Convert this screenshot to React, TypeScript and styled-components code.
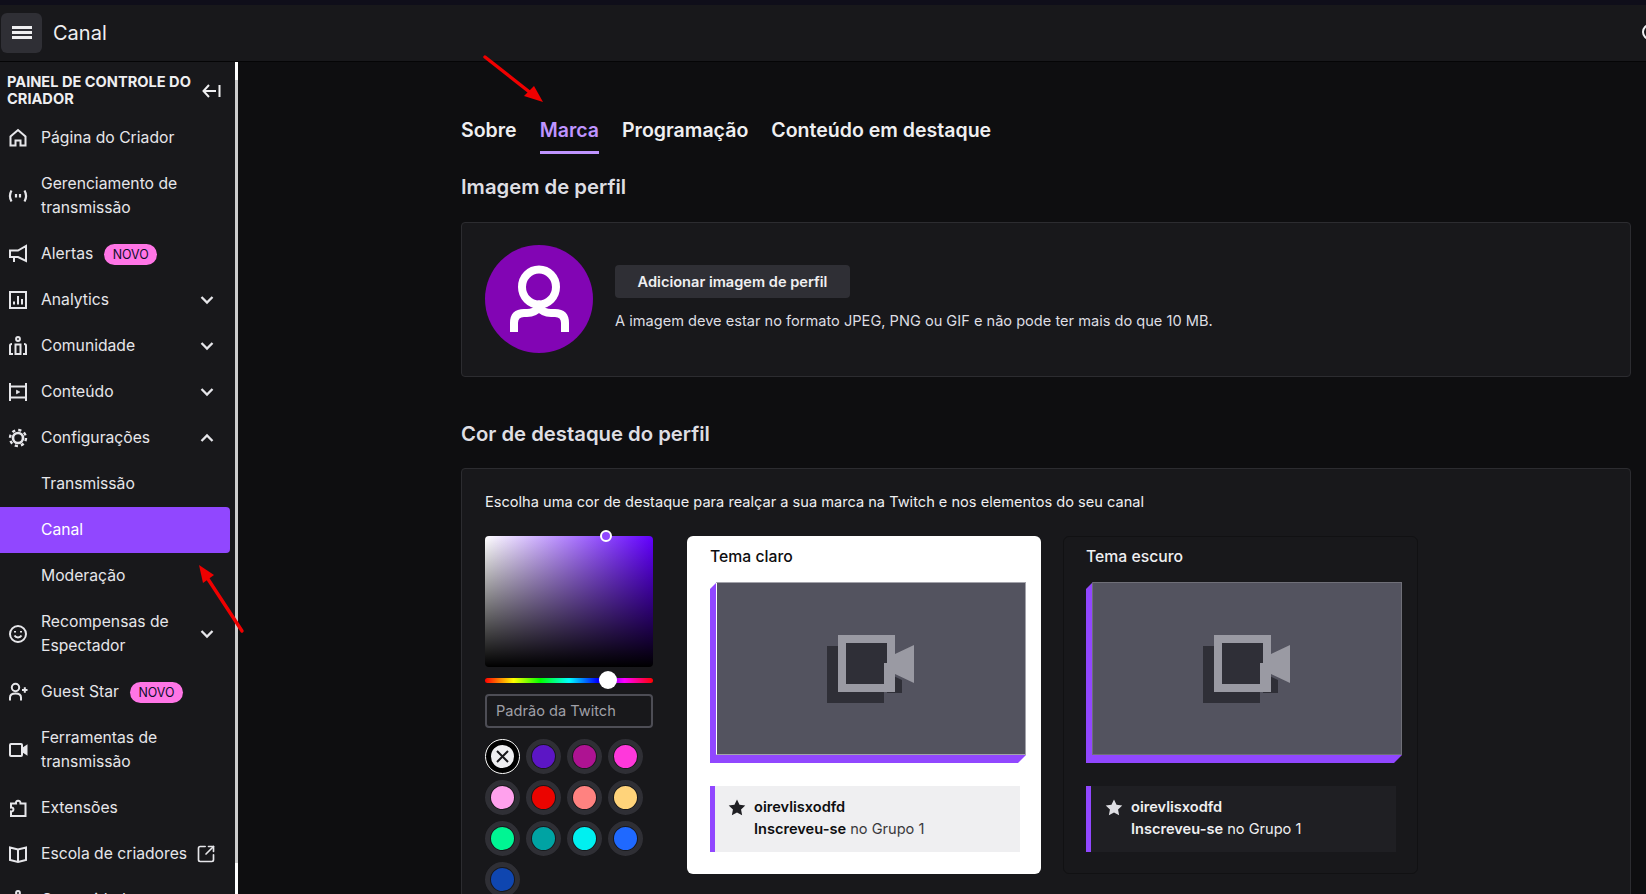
import React from "react";
import styled, { createGlobalStyle } from "styled-components";
import { SquareArrowOutUpRight } from "lucide-react";

const GlobalStyle = createGlobalStyle`
  html, body {
    margin: 0;
    padding: 0;
    height: 100%;
    overflow: hidden;
    background: #0e0e10;
    font-family: Inter, "Liberation Sans", sans-serif;
  }
  * { box-sizing: border-box; }
`;

const Page = styled.div`
  position: relative;
  width: 1646px;
  height: 894px;
  overflow: hidden;
  display: flex;
  flex-direction: column;
`;

const TopStrip = styled.div`
  height: 5px;
  flex: none;
  background: #0f0e1a;
`;

const Header = styled.header`
  height: 57px;
  flex: none;
  display: flex;
  align-items: center;
  gap: 11px;
  padding: 0 0 1px 1px;
  background: #18181b;
  border-bottom: 1px solid #050506;
  position: relative;
  overflow: hidden;
`;

const MenuButton = styled.button`
  width: 41px;
  height: 40px;
  display: flex;
  align-items: center;
  justify-content: center;
  border: 0;
  padding: 0;
  border-radius: 6px;
  background: #2f2f35;
  color: #efeff1;
`;

const PageTitle = styled.h1`
  margin: 0;
  font-size: 20px;
  line-height: 24px;
  font-weight: 400;
  color: #efeff1;
`;

const HeaderEdgeIcon = styled.span`
  position: absolute;
  left: 1642px;
  top: 19px;
  width: 16px;
  height: 16px;
  border: 2.5px solid #efeff1;
  border-radius: 50%;
`;

const Body = styled.div`
  flex: 1;
  min-height: 0;
  display: flex;
`;

const Sidebar = styled.nav`
  width: 235px;
  flex: none;
  background: #18181b;
  overflow: hidden;
  color: #efeff1;
`;

const ScrollTrack = styled.div`
  width: 3px;
  flex: none;
  background: #ffffff;
  padding: 18px 0 31px;
  display: flex;
`;

const ScrollThumb = styled.div`
  flex: 1;
  background: #cdcdcd;
`;

const SideHeading = styled.div`
  height: 52.5px;
  display: flex;
  align-items: center;
  justify-content: space-between;
  padding: 6px 14px 0 7px;
`;

const SideTitle = styled.div`
  width: 192px;
  font-size: 14.6px;
  line-height: 17px;
  font-weight: 700;
  text-transform: uppercase;
`;

const SideRow = styled.div<{ $active?: boolean }>`
  display: flex;
  align-items: center;
  width: 230px;
  min-height: 46px;
  padding: 11px 8px;
  font-size: 15.7px;
  line-height: 24px;
  color: ${(p) => (p.$active ? "#ffffff" : "#e6e6ea")};
  background: ${(p) => (p.$active ? "#9147ff" : "transparent")};
  border-radius: ${(p) => (p.$active ? "0 4px 4px 0" : "0")};
`;

const IconCell = styled.span`
  width: 20px;
  height: 20px;
  margin-right: 13px;
  flex: none;
  display: flex;
  align-items: center;
  justify-content: center;
`;

const ExternalCell = styled.span`
  width: 20px;
  height: 20px;
  margin-left: 9px;
  flex: none;
  display: flex;
  align-items: center;
  justify-content: center;
`;

const ChevronCell = styled.span`
  flex: none;
  width: 16px;
  height: 16px;
  margin-right: 7px;
  display: flex;
`;

const SubLabel = styled.span`
  padding-left: 33px;
`;

const RowLabel = styled.span`
  flex: 1;
  min-width: 0;
  display: flex;
  align-items: center;
`;

const NewBadge = styled.span`
  margin: 2px 0 0 11px;
  height: 21px;
  width: 53px;
  display: inline-flex;
  align-items: center;
  justify-content: center;
  background: #ff75e6;
  color: #0e0e2a;
  font-size: 12.4px;
  font-weight: 400;
  border-radius: 11px;
`;

const Main = styled.main`
  flex: 1;
  min-width: 0;
  padding: 56px 15px 0 223px;
  overflow: hidden;
  color: #efeff1;
`;

const Tabs = styled.div`
  display: flex;
  gap: 23px;
`;

const Tab = styled.div<{ $active?: boolean }>`
  font-size: 19.55px;
  line-height: 24px;
  font-weight: 600;
  padding-bottom: 9px;
  color: ${(p) => (p.$active ? "#bf94ff" : "#efeff1")};
  border-bottom: 3px solid ${(p) => (p.$active ? "#bf94ff" : "transparent")};
`;

const SectionTitle = styled.h2<{ $gap: number }>`
  margin: ${(p) => p.$gap}px 0 0;
  font-size: 20.3px;
  line-height: 24px;
  font-weight: 600;
  color: #dedee3;
`;

const Panel = styled.section<{ $gap: number }>`
  margin-top: ${(p) => p.$gap}px;
  background: #18181b;
  border: 1px solid #2c2c30;
  border-radius: 4px;
`;

const ProfilePanel = styled(Panel)`
  height: 155px;
  padding: 21px 23px 23px;
  display: flex;
  align-items: center;
  gap: 22px;
`;

const Avatar = styled.div`
  width: 108px;
  height: 108px;
  flex: none;
  border-radius: 50%;
  background: #8205b4;
`;

const ProfileText = styled.div`
  margin-bottom: 1px;
`;

const AddButton = styled.button`
  height: 33px;
  width: 235px;
  border: 0;
  border-radius: 4px;
  background: #2f2f35;
  color: #efeff1;
  font: 600 14.6px/20px Inter, "Liberation Sans", sans-serif;
`;

const Hint = styled.p`
  margin: 13px 0 0;
  font-size: 14.6px;
  line-height: 20px;
  color: #dedee3;
`;

const ColorPanel = styled(Panel)`
  padding: 23px 23px 40px;
`;

const ColorHint = styled.p`
  margin: 0 0 24px;
  font-size: 14.6px;
  line-height: 20px;
  color: #efeff1;
`;

const ColorRow = styled.div`
  display: flex;
  align-items: flex-start;
`;

const PickerColumn = styled.div`
  width: 168px;
  margin-right: 34px;
  flex: none;
`;

const SaturationBox = styled.div`
  position: relative;
  height: 131px;
  border-radius: 4px;
  background: linear-gradient(to top, #000 0%, transparent 100%),
    linear-gradient(to right, #fff 0%, #6200ff 100%);
`;

const SaturationHandle = styled.span`
  position: absolute;
  left: 115px;
  top: -6px;
  width: 12px;
  height: 12px;
  border: 2px solid #fff;
  border-radius: 50%;
  background: #9147ff;
`;

const HueBar = styled.div`
  position: relative;
  margin-top: 11px;
  height: 5px;
  border-radius: 3px;
  background: linear-gradient(
    to right,
    #f00 0%,
    #ff0 17%,
    #0f0 33%,
    #0ff 50%,
    #00f 67%,
    #f0f 83%,
    #f00 100%
  );
`;

const HueThumb = styled.span`
  position: absolute;
  left: 114px;
  top: -7px;
  width: 18px;
  height: 18px;
  border-radius: 50%;
  background: #fff;
`;

const ColorInput = styled.div`
  margin-top: 11px;
  height: 34px;
  padding: 0 9px;
  display: flex;
  align-items: center;
  border: 2px solid #4d4d55;
  border-radius: 4px;
  font-size: 14.6px;
  color: #a0a0a8;
`;

const SwatchGrid = styled.div`
  margin-top: 11px;
  display: grid;
  grid-template-columns: repeat(4, 35px);
  gap: 6px;
`;

const Swatch = styled.span<{ $color: string; $selected?: boolean }>`
  width: 35px;
  height: 35px;
  border-radius: 50%;
  display: flex;
  align-items: center;
  justify-content: center;
  color: #18181b;
  background: ${(p) => p.$color};
  border: 6px solid ${(p) => (p.$selected ? "#000" : "#18181b")};
  outline: ${(p) => (p.$selected ? "1.5px solid #fff" : "5px solid #2f2f35")};
  outline-offset: ${(p) => (p.$selected ? "-1.5px" : "-5px")};
`;

const ThemeCard = styled.div<{ $light?: boolean }>`
  width: ${(p) => (p.$light ? 354 : 355)}px;
  height: 338px;
  flex: none;
  margin-right: 22px;
  padding: ${(p) => (p.$light ? "11px 22px 0 23px" : "10px 22px 0 22px")};
  border-radius: 6px;
  background: ${(p) => (p.$light ? "#ffffff" : "#18181b")};
  border: ${(p) => (p.$light ? "0" : "1px solid #111113")};
  color: ${(p) => (p.$light ? "#0e0e10" : "#efeff1")};
`;

const ThemeTitle = styled.div`
  font-size: 15.75px;
  line-height: 20px;
  font-weight: 500;
`;

const PreviewFrame = styled.div`
  margin-top: 15px;
  width: 316px;
  height: 181px;
  padding: 0 0 8px 6px;
  background: #9147ff;
  clip-path: polygon(
    0 7px,
    7px 0,
    100% 0,
    100% calc(100% - 8px),
    calc(100% - 8px) 100%,
    0 100%
  );
`;

const PreviewScreen = styled.div<{ $light?: boolean }>`
  height: 100%;
  display: flex;
  align-items: center;
  justify-content: center;
  background: #53535f;
  border: 1px solid ${(p) => (p.$light ? "#a3a3ab" : "#6f6f78")};
  border-left-color: ${(p) => (p.$light ? "#ffffff" : "#6f6f78")};
`;

const ChatLine = styled.div<{ $light?: boolean }>`
  margin-top: 23px;
  width: 310px;
  height: 66px;
  display: flex;
  gap: 8px;
  padding: 10px 0 0 ${(p) => (p.$light ? 13 : 14)}px;
  border-left: 5px solid #9147ff;
  font-size: 14.6px;
  line-height: 22px;
  background: ${(p) => (p.$light ? "#efeff1" : "#1f1f23")};
`;

const StarCell = styled.span<{ $light?: boolean }>`
  flex: none;
  width: 18px;
  height: 22px;
  display: flex;
  align-items: center;
  color: ${(p) => (p.$light ? "#1f1f23" : "#dedee3")};
`;

const ChatName = styled.div`
  font-weight: 600;
`;

const ChatEvent = styled.span`
  font-weight: 600;
`;

const ChatTier = styled.span<{ $light?: boolean }>`
  color: ${(p) => (p.$light ? "#3a3a3d" : "#efeff1")};
`;

const Annotation = styled.svg`
  position: absolute;
  left: 0;
  top: 0;
  pointer-events: none;
`;

const Icon: React.FC<{ children: React.ReactNode }> = ({ children }) => (
  <svg width={20} height={20} viewBox="0 0 20 20" fill="none" stroke="currentColor" strokeWidth={2}>
    {children}
  </svg>
);

const HomeIcon = () => (
  <Icon>
    <path d="M2.5 17.5V8.5L10 2l7.5 6.5v9h-5v-5h-5v5z" />
  </Icon>
);

const BroadcastIcon = () => (
  <Icon>
    <path d="M3.5 4.5c-2 3.500-2 7.500 0 11M16.500 4.500c2 3.500 2 7.500 0 11" strokeWidth={2.2} />
    <path d="M8 8v3.500M12 8v3.500" strokeWidth={2.2} />
  </Icon>
);

const MegaphoneIcon = () => (
  <Icon>
    <path d="M18 2v15l-8-4H2V6.500h8z" />
    <path d="M6 13v5" />
  </Icon>
);

const AnalyticsIcon = () => (
  <Icon>
    <rect x="2" y="2" width="16" height="16" />
    <path d="M6 14.500v-3M10 14.500V6M14 14.500V9" />
  </Icon>
);

const CommunityIcon = () => (
  <Icon>
    <circle cx="10" cy="3" r="1.900" />
    <path d="M7.500 18V8.500h5V18z" />
    <path d="M5 18H2V9.500c0-1 1-1.500 2-1.500M15 18h3V9.500c0-1-1-1.500-2-1.500" />
  </Icon>
);

const ContentIcon = () => (
  <Icon>
    <path d="M2 1v18M18 1v18M1 4.500h18M1 15.500h18" />
    <path d="M8.500 8.200l3.200 1.800-3.200 1.800z" fill="currentColor" strokeWidth={0.8} />
  </Icon>
);

const GearIcon = () => (
  <Icon>
    <circle cx="10" cy="10" r="5" strokeWidth={2.6} />
    <circle cx="10" cy="10" r="8" strokeWidth={2.4} strokeDasharray="3.200 3.083" />
  </Icon>
);

const RewardsIcon = () => (
  <Icon>
    <circle cx="10" cy="10" r="8" />
    <path d="M6.500 11.500c1.500 2.500 5.500 2.500 7 0" />
    <path d="M7 7v1.500M13 7v1.500" />
  </Icon>
);

const GuestIcon = () => (
  <Icon>
    <circle cx="7.500" cy="5.500" r="3.700" />
    <path d="M2 18.500v-3c0-2.500 2-4 5.500-4s5.500 1.500 5.500 4v3" />
    <path d="M14 8h5.500M16.800 5.300v5.400" />
  </Icon>
);

const VideoIcon = () => (
  <Icon>
    <rect x="2" y="4" width="12" height="12" rx="1" />
    <path d="M14 9l4.500-3v8L14 11z" fill="currentColor" />
  </Icon>
);

const PuzzleIcon = () => (
  <Icon>
    <path d="M8 5.500c-.6-3.500 4.500-4 4.500 0h5v12.500H3v-4.500c3 .5 3.500-4.500 0-4V5.500z" />
  </Icon>
);

const BookIcon = () => (
  <Icon>
    <path d="M2 3.500l8 2 8-2v12.500l-8 2-8-2z" />
    <path d="M10 5.500V18" />
  </Icon>
);

const Chevron: React.FC<{ up?: boolean }> = ({ up }) => (
  <ChevronCell>
    <svg width="16" height="16" viewBox="0 0 16 16" fill="none" stroke="currentColor" strokeWidth={2.3}>
      <path d={up ? "M2.500 11L8 5.500 13.500 11" : "M2.500 5L8 10.500 13.500 5"} />
    </svg>
  </ChevronCell>
);

const StarIcon = () => (
  <svg width="19" height="19" viewBox="0 0 20 20" fill="currentColor">
    <path d="M10 1l2.800 5.900 6.400.8-4.700 4.500 1.200 6.400L10 15.500l-5.700 3.100 1.200-6.400L.8 7.700l6.400-.8z" />
  </svg>
);

const AvatarIcon = () => (
  <svg width="108" height="108" viewBox="0 0 108 108" fill="none" stroke="#fff" strokeWidth={8}>
    <ellipse cx="54" cy="42" rx="17" ry="17.500" />
    <path d="M29 87V78Q29 68 39 68H42Q50 68 54 62Q58 68 66 68H70Q80 68 80 78V87" />
  </svg>
);

const CameraPlaceholder = () => (
  <svg width="88" height="68" viewBox="0 0 88 68">
    <path d="M0 11h57v57H0zM60 38l15 7v13H60z" fill="#2f2f37" />
    <path d="M11 0h57v19l19-9v38l-19-9v18H11z" fill="#9a9aa3" />
    <rect x="19" y="8" width="41" height="41" fill="#2f2f37" />
    <rect x="57" y="28" width="3" height="21" fill="#9a9aa3" />
  </svg>
);

const swatches = [
  "#efeff1",
  "#5c16c5",
  "#ae1392",
  "#ff38db",
  "#ffa1ed",
  "#eb0400",
  "#ff8280",
  "#ffd37a",
  "#00f593",
  "#00a3a3",
  "#00f0f0",
  "#1f69ff",
  "#0f46b0",
];

interface NavItem {
  label: React.ReactNode;
  icon?: React.ReactNode;
  badge?: boolean;
  chevron?: "up" | "down";
  external?: boolean;
  active?: boolean;
}

const navItems: NavItem[] = [
  { label: "Página do Criador", icon: <HomeIcon /> },
  { label: <>Gerenciamento de<br />transmissão</>, icon: <BroadcastIcon /> },
  { label: "Alertas", icon: <MegaphoneIcon />, badge: true },
  { label: "Analytics", icon: <AnalyticsIcon />, chevron: "down" },
  { label: "Comunidade", icon: <CommunityIcon />, chevron: "down" },
  { label: "Conteúdo", icon: <ContentIcon />, chevron: "down" },
  { label: "Configurações", icon: <GearIcon />, chevron: "up" },
  { label: "Transmissão" },
  { label: "Canal", active: true },
  { label: "Moderação" },
  { label: <>Recompensas de<br />Espectador</>, icon: <RewardsIcon />, chevron: "down" },
  { label: "Guest Star", icon: <GuestIcon />, badge: true },
  { label: <>Ferramentas de<br />transmissão</>, icon: <VideoIcon /> },
  { label: "Extensões", icon: <PuzzleIcon /> },
  { label: "Escola de criadores", icon: <BookIcon />, external: true },
  { label: "Comunidade", icon: <CommunityIcon /> },
];

const ThemePreview: React.FC<{ light?: boolean; title: string }> = ({ light, title }) => (
  <ThemeCard $light={light}>
    <ThemeTitle>{title}</ThemeTitle>
    <PreviewFrame>
      <PreviewScreen $light={light}>
        <CameraPlaceholder />
      </PreviewScreen>
    </PreviewFrame>
    <ChatLine $light={light}>
      <StarCell $light={light}>
        <StarIcon />
      </StarCell>
      <div>
        <ChatName>oirevlisxodfd</ChatName>
        <ChatEvent>Inscreveu-se</ChatEvent> <ChatTier $light={light}>no Grupo 1</ChatTier>
      </div>
    </ChatLine>
  </ThemeCard>
);

export default function App() {
  return (
    <Page>
      <GlobalStyle />
      <TopStrip />
      <Header>
        <MenuButton aria-label="Menu">
          <svg width="20" height="13" viewBox="0 0 20 13" fill="currentColor">
            <rect width="20" height="3" />
            <rect y="5" width="20" height="3" />
            <rect y="10" width="20" height="3" />
          </svg>
        </MenuButton>
        <PageTitle>Canal</PageTitle>
        <HeaderEdgeIcon />
      </Header>
      <Body>
        <Sidebar>
          <SideHeading>
            <SideTitle>Painel de controle do criador</SideTitle>
            <svg width="19" height="14" viewBox="0 0 19 14" fill="none" stroke="currentColor" strokeWidth={2}>
              <path d="M7 1L1.500 7 7 13M2 7h12M17.500 1v12" />
            </svg>
          </SideHeading>
          {navItems.map((item, i) => (
            <SideRow key={i} $active={item.active}>
              {item.icon ? <IconCell>{item.icon}</IconCell> : null}
              <RowLabel>
                {item.icon ? item.label : <SubLabel>{item.label}</SubLabel>}
                {item.badge && <NewBadge>NOVO</NewBadge>}
                {item.external && (
                  <ExternalCell>
                    <SquareArrowOutUpRight size={20} strokeWidth={2} />
                  </ExternalCell>
                )}
              </RowLabel>
              {item.chevron && <Chevron up={item.chevron === "up"} />}
            </SideRow>
          ))}
        </Sidebar>
        <ScrollTrack>
          <ScrollThumb />
        </ScrollTrack>
        <Main>
          <Tabs>
            <Tab>Sobre</Tab>
            <Tab $active>Marca</Tab>
            <Tab>Programação</Tab>
            <Tab>Conteúdo em destaque</Tab>
          </Tabs>
          <SectionTitle $gap={21}>Imagem de perfil</SectionTitle>
          <ProfilePanel $gap={23}>
            <Avatar>
              <AvatarIcon />
            </Avatar>
            <ProfileText>
              <AddButton>Adicionar imagem de perfil</AddButton>
              <Hint>A imagem deve estar no formato JPEG, PNG ou GIF e não pode ter mais do que 10 MB.</Hint>
            </ProfileText>
          </ProfilePanel>
          <SectionTitle $gap={45}>Cor de destaque do perfil</SectionTitle>
          <ColorPanel $gap={22}>
            <ColorHint>
              Escolha uma cor de destaque para realçar a sua marca na Twitch e nos elementos do seu canal
            </ColorHint>
            <ColorRow>
              <PickerColumn>
                <SaturationBox>
                  <SaturationHandle />
                </SaturationBox>
                <HueBar>
                  <HueThumb />
                </HueBar>
                <ColorInput>Padrão da Twitch</ColorInput>
                <SwatchGrid>
                  {swatches.map((color, i) => (
                    <Swatch key={color} $color={color} $selected={i === 0}>
                      {i === 0 && (
                        <svg width="15" height="15" viewBox="0 0 15 15" stroke="currentColor" strokeWidth={2}>
                          <path d="M2 2l11 11M13 2L2 13" />
                        </svg>
                      )}
                    </Swatch>
                  ))}
                </SwatchGrid>
              </PickerColumn>
              <ThemePreview light title="Tema claro" />
              <ThemePreview title="Tema escuro" />
            </ColorRow>
          </ColorPanel>
        </Main>
      </Body>
      <Annotation width="1646" height="894" viewBox="0 0 1646 894">
        <path d="M485 57L532 94" stroke="#f00000" strokeWidth={3.4} strokeLinecap="round" />
        <path d="M543 102L524 96L534 86z" fill="#f00000" />
        <path d="M242 631L206 576" stroke="#f00000" strokeWidth={3.4} strokeLinecap="round" />
        <path d="M199 565L214 575L203 583z" fill="#f00000" />
      </Annotation>
    </Page>
  );
}
